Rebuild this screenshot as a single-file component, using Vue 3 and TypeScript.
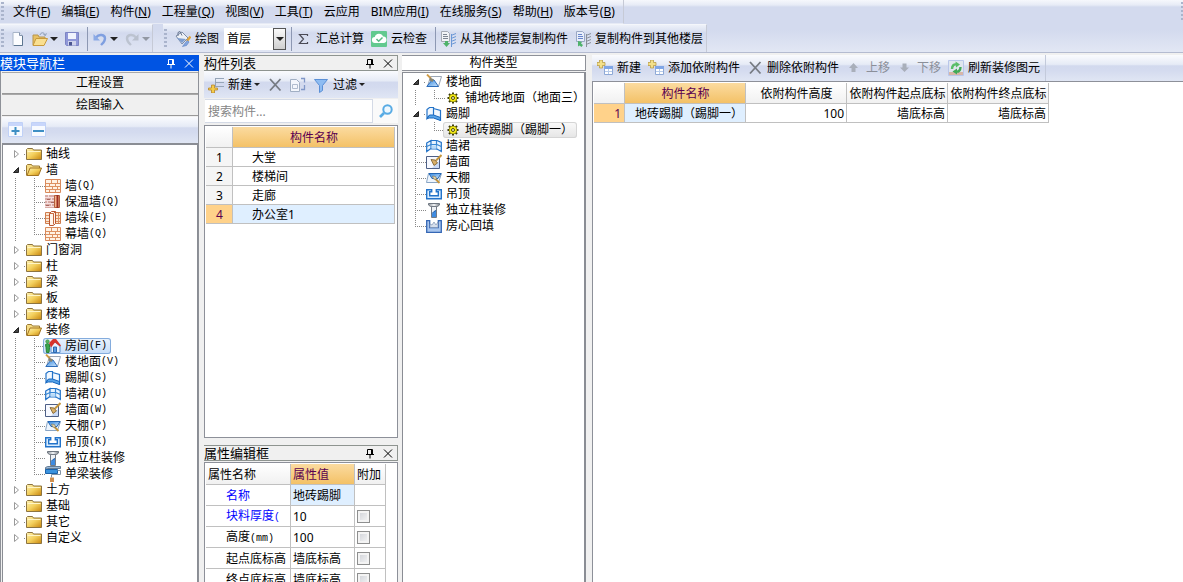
<script setup lang="ts">
import { ref } from 'vue'

interface MenuEntry { label: string; key?: string }
interface Command { icon: string; label: string; disabled?: boolean }
interface TreeNode {
  label: string
  key?: string
  icon: string
  open?: boolean
  leaf?: boolean
  selected?: boolean
  children?: TreeNode[]
}
interface PropertyRow { name: string; unit?: string; value: string; link?: boolean; check?: boolean }

const menus: MenuEntry[] = [
  { label: '文件', key: 'F' },
  { label: '编辑', key: 'E' },
  { label: '构件', key: 'N' },
  { label: '工程量', key: 'Q' },
  { label: '视图', key: 'V' },
  { label: '工具', key: 'T' },
  { label: '云应用' },
  { label: 'BIM应用', key: 'I' },
  { label: '在线服务', key: 'S' },
  { label: '帮助', key: 'H' },
  { label: '版本号', key: 'B' },
]

const floor = ref('首层')
const keyword = ref('')

const moduleTree: TreeNode[] = [
  { label: '轴线', icon: 'folder' },
  {
    label: '墙', icon: 'folder-open', open: true,
    children: [
      { label: '墙', key: 'Q', icon: 'brick' },
      { label: '保温墙', key: 'Q', icon: 'brick-warm' },
      { label: '墙垛', key: 'E', icon: 'brick-pier' },
      { label: '幕墙', key: 'Q', icon: 'brick' },
    ],
  },
  { label: '门窗洞', icon: 'folder' },
  { label: '柱', icon: 'folder' },
  { label: '梁', icon: 'folder' },
  { label: '板', icon: 'folder' },
  { label: '楼梯', icon: 'folder' },
  {
    label: '装修', icon: 'folder-open', open: true,
    children: [
      { label: '房间', key: 'F', icon: 'house', selected: true },
      { label: '楼地面', key: 'V', icon: 'floor' },
      { label: '踢脚', key: 'S', icon: 'skirting' },
      { label: '墙裙', key: 'U', icon: 'dado' },
      { label: '墙面', key: 'W', icon: 'wallface' },
      { label: '天棚', key: 'P', icon: 'ceiling' },
      { label: '吊顶', key: 'K', icon: 'suspended' },
      { label: '独立柱装修', icon: 'column' },
      { label: '单梁装修', icon: 'beam' },
    ],
  },
  { label: '土方', icon: 'folder' },
  { label: '基础', icon: 'folder' },
  { label: '其它', icon: 'folder' },
  { label: '自定义', icon: 'folder' },
]

const typeTree: TreeNode[] = [
  { label: '楼地面', icon: 'floor', open: true, children: [{ label: '铺地砖地面（地面三）', icon: 'gear' }] },
  { label: '踢脚', icon: 'skirting', open: true, children: [{ label: '地砖踢脚（踢脚一）', icon: 'gear', selected: true }] },
  { label: '墙裙', icon: 'dado', leaf: true },
  { label: '墙面', icon: 'wallface', leaf: true },
  { label: '天棚', icon: 'ceiling', leaf: true },
  { label: '吊顶', icon: 'suspended', leaf: true },
  { label: '独立柱装修', icon: 'column', leaf: true },
  { label: '房心回填', icon: 'backfill', leaf: true },
]

const trees = { module: moduleTree, type: typeTree }

const components = ['大堂', '楼梯间', '走廊', '办公室1']
const current = ref(3)

const properties: PropertyRow[] = [
  { name: '名称', value: '地砖踢脚', link: true },
  { name: '块料厚度', unit: '(', value: '10', link: true, check: true },
  { name: '高度', unit: '(mm)', value: '100', check: true },
  { name: '起点底标高', value: '墙底标高', check: true },
  { name: '终点底标高', value: '墙底标高', check: true },
]

const commands: Command[] = [
  { icon: 'add-table', label: '新建' },
  { icon: 'add-table', label: '添加依附构件' },
  { icon: 'cross', label: '删除依附构件' },
  { icon: 'up', label: '上移', disabled: true },
  { icon: 'down', label: '下移', disabled: true },
  { icon: 'refresh', label: '刷新装修图元' },
]
</script>

<template>
  <div class="app">
    <svg class="sprite" aria-hidden="true">
      <defs>
        <linearGradient id="gold" x1="0" y1="0" x2="1" y2="1"><stop offset="0" stop-color="#fff3b4" /><stop offset=".5" stop-color="#f3cf5c" /><stop offset="1" stop-color="#c8850c" /></linearGradient>
        <linearGradient id="sky" x1="0" y1="0" x2="1" y2="1"><stop offset="0" stop-color="#2f86e0" /><stop offset="1" stop-color="#cfe6fb" /></linearGradient>
        <linearGradient id="steel" x1="0" y1="0" x2="1" y2="0"><stop offset="0" stop-color="#8a9097" /><stop offset=".5" stop-color="#f4f6f8" /><stop offset="1" stop-color="#777d85" /></linearGradient>
      </defs>
      <symbol id="i-page" viewBox="0 0 16 16"><path d="M3 1.500h6.500l3 3v10H3z" fill="#fcfdff" stroke="#a9b6c9" /><path d="M9.500 1.500v3h3" fill="#d8e2f0" stroke="#8393ac" /><path d="M12.500 5v9.500H4" fill="none" stroke="#5d7690" /></symbol>
      <symbol id="i-open" viewBox="0 0 16 16"><path d="M1 14V4h5l1 2h6v3" fill="#e7c063" stroke="#b8954c" /><path d="M1 14.500L4 7.500h11.500L12 14.500z" fill="#f9df91" stroke="#c99a3b" /><path d="M8 4c1-3 4-3 5 0M11.500 3.500l2 1 .8-2.200" fill="none" stroke="#8c9db5" /></symbol>
      <symbol id="i-save" viewBox="0 0 16 16"><path d="M1.500 1.500h13v13h-12l-1-1z" fill="#8f97d8" stroke="#7d85c4" /><path d="M4 2h8v6H4z" fill="#f0f3fd" /><path d="M4 10h8v4.500H4z" fill="#cfd3ec" /><path d="M5 11h3v3.500H5z" fill="#4a5590" /></symbol>
      <symbol id="i-undo" viewBox="0 0 16 16"><path d="M4 6.500c3-4 9-3 9 1 0 3-2 4.500-4 6.500" fill="none" stroke="#7f9fe0" stroke-width="2.400" /><path d="M1.500 3v6.500H8z" fill="#8baae6" /></symbol>
      <symbol id="i-redo" viewBox="0 0 16 16"><path d="M12 6.500c-3-4-9-3-9 1 0 3 2 4.500 4 6.500" fill="none" stroke="#bcc3d0" stroke-width="2.400" /><path d="M14.500 3v6.500H8z" fill="#b9c0cd" /></symbol>
      <symbol id="i-paint" viewBox="0 0 16 16"><path d="M1 5l6-4 6 6-6 6z" fill="#eef1f6" stroke="#7d8da8" /><path d="M2 7l5 5 4-4z" fill="#7e9ed0" /><path d="M3 5V1.500L5 .5l2 4" fill="none" stroke="#66758f" /><path d="M15.500 5.500L12 10" stroke="#e0a437" stroke-width="2.200" /><path d="M12.500 9.500l1.500 1.500-2.500 3.500-4 1 3-4z" fill="#83a6df" stroke="#5a80c0" stroke-width=".6" /></symbol>
      <symbol id="i-sum" viewBox="0 0 16 16"><path d="M11.500 5V3.500h-8L7.500 8l-4 4.500h8V11" fill="none" stroke="#4a4a55" stroke-width="1.200" /></symbol>
      <symbol id="i-cloud" viewBox="0 0 16 16"><rect width="16" height="16" rx="1" fill="#62c98f" /><path d="M4 12a3 3 0 01-.2-6A4.300 4.300 0 0112 5.600 3.200 3.200 0 0112.500 12z" fill="#fff" /><path d="M5.500 8l2.200 2.200L11.500 6.500" fill="none" stroke="#58b884" stroke-width="1.500" /></symbol>
      <symbol id="i-copy-from" viewBox="0 0 16 16"><path d="M1.500.5h6l2 2v8h-8z" fill="#f2f4f8" stroke="#a5aab4" /><path d="M3 3.500h4M3 5.500h5M3 7.500h5" stroke="#7d8592" /><path d="M11.500 3v13M11 4.500l5-2M11 7.500l5-2M11 10.500l5-2M11 13.500l5-2" stroke="#6b98d6" fill="none" /><path d="M5 10h3v2h2l-3.500 4L3 12h2z" fill="#4fb26b" /></symbol>
      <symbol id="i-copy-to" viewBox="0 0 16 16"><path d="M1.500.5h6l2 2v8h-8z" fill="#e8eefb" stroke="#9aa8c4" /><path d="M3 3.500h4M3 5.500h5M3 7.500h5" stroke="#6885cc" /><path d="M11.500 3v13M11 4.500l5-2M11 7.500l5-2M11 10.500l5-2M11 13.500l5-2" stroke="#8a9099" fill="none" /><path d="M3 10l4 1-1 1.500L8 14l-1.500 2-2-1.500L3 15.500z" fill="#4fb26b" /></symbol>
      <symbol id="i-plus" viewBox="0 0 16 16"><path d="M.5.500h14v14H.5z" fill="#f7faff" stroke="#c0d1f7" /><path d="M1 1h13v3H1z" fill="#c8d6fb" /><path d="M3.500 9h8M7.500 5v8" stroke="#3e8fc4" stroke-width="2" /></symbol>
      <symbol id="i-minus" viewBox="0 0 16 16"><path d="M.5.500h14v14H.5z" fill="#f7faff" stroke="#c0d1f7" /><path d="M1 1h13v3H1z" fill="#c8d6fb" /><path d="M2 9h11" stroke="#3e8fc4" stroke-width="2" /></symbol>
      <symbol id="i-folder" viewBox="0 0 16 16"><path d="M.5 13.500V3.500l1-1h5l1 1.500h8v9.500z" fill="url(#gold)" stroke="#8d7440" /><path d="M1.500 5.500h13" stroke="#fff5c6" /></symbol>
      <symbol id="i-folder-open" viewBox="0 0 16 16"><path d="M.5 13.500V3.500l1-1h4l1 1.500h7v3" fill="#f6dc84" stroke="#9b7a34" /><path d="M1 13.500l3-7.500h11.500L12.500 13.500z" fill="url(#gold)" stroke="#a27421" /></symbol>
      <symbol id="i-brick" viewBox="0 0 16 16"><path d="M.5 1.500h15v13H.5z" fill="#fff2e4" stroke="#d98a5c" /><path d="M1 5.500h14M1 8.500h14M1 11.500h14M6.500 2v3.500M12.500 2v3.500M4.500 6v2.500M10.500 6v2.500M7.500 9v2.500M12.500 9v2.500M4.500 12v2M10.500 12v2" stroke="#dd9162" /></symbol>
      <symbol id="i-brick-warm" viewBox="0 0 16 16"><path d="M0 1h10v13H0z" fill="#d9aca6" /><path d="M0 3.500h9M0 6.500h9M0 9.500h9M0 12.500h9M3.500 1v2M6.500 4v2M2.500 7v2M6.500 10v2" stroke="#f5dede" /><path d="M2 5.500h3M6 8.500h3M1 11.500h3" stroke="#a86762" /><path d="M9.500 1.500h5v12h-5z" fill="#f3b58e" stroke="#b3603d" /><path d="M12.500 1v13" stroke="#9c2f22" stroke-width="2" /></symbol>
      <symbol id="i-brick-pier" viewBox="0 0 16 16"><path d="M.5 2.500h15v11H.5z" fill="#fbe6d0" stroke="#cf7c4e" /><path d="M1 5.500h14M1 8.500h14M1 11.500h14M13.500 3v10" stroke="#dd9162" /><path d="M4.500 3.500l2-2h4v12l-2 2h-4z" fill="#fff6ed" stroke="#b95631" /><path d="M8.500 3.500v11M4.500 3.500h4l2-2" fill="none" stroke="#c8693f" /></symbol>
      <symbol id="i-house" viewBox="0 0 16 16"><path d="M6 8l4-4 5 4v6.500H6z" fill="#e9f2fd" stroke="#568dca" /><path d="M4 5l4-4h3l5 6.500-1 1L10 4.500 6 9.500z" fill="#d8332b" /><path d="M8.500 9h3v5.500h-3z" fill="#5c9be0" stroke="#2e68ac" /><path d="M.5 6.500l2-1 2 1v3l-.5 5H1.500l-.5-5z" fill="#3ca64c" stroke="#27803a" /><circle cx="2.500" cy="3.500" r="1.800" fill="#58b45c" stroke="#2f8a3c" stroke-width=".5" /></symbol>
      <symbol id="i-floor" viewBox="0 0 16 16"><path d="M4.500 2.500h11l-3 10H1.500z" fill="#fafcff" stroke="#9aa5b4" /><path d="M.8 12.500L6 6h2l4.500 6.500z" fill="url(#sky)" stroke="#2d6cb9" /><path d="M1 .5l4 4" stroke="#cf9b45" stroke-width="1.800" /><path d="M4 3.500l4 2L6.500 8 3.500 6.500z" fill="#8a8470" /></symbol>
      <symbol id="i-skirting" viewBox="0 0 16 16"><path d="M1 3.500L3.500 1.500h4v8h-4L1 12.500zM7.500 2.500l7 2v9.500l-7-3z" fill="#f2f8fe" stroke="#2373c8" stroke-width="1.200" /><path d="M1 12.500l2.500-3.500h4l7 2.500V14.500l-7-2.500h-4z" fill="#57a4e9" stroke="#1866bd" /></symbol>
      <symbol id="i-dado" viewBox="0 0 16 16"><path d="M.7 5L5 2.500v8L.7 13.500zM5 2.500h6l4.300 2v9L11 11H5z" fill="#e9f4fe" stroke="#2373c8" stroke-width="1.200" /><path d="M.7 8.500L5 6.500h6l4.300 2M10.500 3v8.500" fill="none" stroke="#3787d4" stroke-width="1.200" /><path d="M5.500 7.500h5v3h-5z" fill="#b9dbf8" /></symbol>
      <symbol id="i-wallface" viewBox="0 0 16 16"><path d="M.5 2.500h13v12H.5z" fill="#f7f9ff" stroke="#4d5f86" /><path d="M6 14l7-7v7z" fill="#c9daf6" /><path d="M15.500 1L10 6.500" stroke="#c5963c" stroke-width="2" /><path d="M5 5.500l4 .5 2.500 3L8 11.500z" fill="#d9b068" stroke="#775b29" stroke-width=".8" /></symbol>
      <symbol id="i-ceiling" viewBox="0 0 16 16"><path d="M2.500 3.500h13l-3 9h-12z" fill="#eef5fd" stroke="#88a4c4" /><path d="M3 3.500h12l-3 5H6z" fill="url(#sky)" stroke="#2467b4" /><path d="M9 8.500l4.500 4.500" stroke="#c6953b" stroke-width="1.800" /><path d="M6.500 6l3 .5 1.500 3-3.500-.5z" fill="#e5d5a8" stroke="#6d6959" stroke-width=".6" /></symbol>
      <symbol id="i-suspended" viewBox="0 0 16 16"><path d="M.7 3.700h5v2h-2v4h8.600v-4h-2v-2h5v9H.7z" fill="#d8ecfe" stroke="#2273ca" stroke-width="1.400" /></symbol>
      <symbol id="i-column" viewBox="0 0 16 16"><path d="M2.500 1.500h11v1.500l-2 1.500h-7l-2-1.500z" fill="url(#steel)" stroke="#6f7781" /><path d="M5.500 4.500h5v11h-5z" fill="#eef1f5" stroke="#747b85" /><path d="M6 11.500l2-2 2-1V15H6z" fill="#3f8be0" /><path d="M6 11.500l2-2 2-1" fill="none" stroke="#1c5ba6" /></symbol>
      <symbol id="i-beam" viewBox="0 0 16 16"><path d="M.5 1.500l2-1h13v2h-13l-2 1z" fill="#9bb8d6" stroke="#49637f" stroke-width=".8" /><path d="M.5 3.500h12v4H.5z" fill="#3b93de" stroke="#1d62a8" /><path d="M12.500 4.500h3v4h-9v3" fill="none" stroke="#8494a4" /><path d="M5 11.500h4V16H5z" fill="#cf9050" /></symbol>
      <symbol id="i-backfill" viewBox="0 0 16 16"><path d="M.7 2.700h3v7h8.600v-7h3v11.600H.7z" fill="#a9c6ee" stroke="#3567b5" stroke-width="1.300" /><path d="M4 9.500V6l2 1 2-3 2 3 2-3v5.500z" fill="#d6dfec" stroke="#7e93b5" stroke-width=".7" /></symbol>
      <symbol id="i-gear" viewBox="0 0 16 16"><g stroke="#38370c" stroke-width="2"><path d="M8 2.500v11M2.500 8h11M4 4l8 8M12 4l-8 8" /></g><circle cx="8" cy="8" r="4" fill="#f4ea13" stroke="#6a670d" stroke-width=".6" /><circle cx="8" cy="8" r="1.500" fill="#fffbc0" stroke="#4b490b" /></symbol>
      <symbol id="i-new-item" viewBox="0 0 16 16"><path d="M7 1.500h9M7 5.500h9M7 9.500h9" stroke="#96a5b8" /><path d="M7.500 1v9" stroke="#96a5b8" /><path d="M3.500 8h3v3h3v2h-3v3h-3v-3h-3v-2h3z" fill="#f5cd4a" stroke="#b7872a" stroke-width=".8" /></symbol>
      <symbol id="i-cross" viewBox="0 0 16 16"><path d="M3 2l10.500 11.500M13.500 2L3 13.500" stroke="#767b82" stroke-width="1.800" /></symbol>
      <symbol id="i-copy" viewBox="0 0 16 16"><path d="M.5 2.500h6l3 3v9h-9z" fill="#f3f6fc" stroke="#a1afc4" /><path d="M2.500 7.500h5v4h-5z" fill="none" stroke="#b0bccf" /><path d="M11 1.500h3.500v4M14.500 8v4.500H11" fill="none" stroke="#8097c8" stroke-width="1.300" /></symbol>
      <symbol id="i-funnel" viewBox="0 0 16 16"><path d="M1.500 2.500h13L9.500 8.500v5l-3 2v-7z" fill="#8ebcf2" stroke="#5a8fd6" /></symbol>
      <symbol id="i-search" viewBox="0 0 16 16"><circle cx="9.500" cy="6.500" r="4.200" fill="#eef8ff" stroke="#58abe4" stroke-width="2" /><path d="M6 10l-4 4" stroke="#58abe4" stroke-width="2.600" /></symbol>
      <symbol id="i-add-table" viewBox="0 0 16 16"><path d="M7.500 6.500h8v8h-8z" fill="#fff" stroke="#8ea9d6" /><path d="M7 6h9v3H7z" fill="#7fa6e6" /><path d="M8 11.500h7M11.500 9v5" stroke="#b7cbea" /><path d="M2.500 0h3v2.500H8v3H5.500V8h-3V5.500H0v-3h2.500z" fill="#f3e089" stroke="#b1933a" stroke-width=".7" /></symbol>
      <symbol id="i-up" viewBox="0 0 16 16"><path d="M7.500 3l4.500 5H9.500v4h-4V8H3z" fill="#a9afba" /></symbol>
      <symbol id="i-down" viewBox="0 0 16 16"><path d="M7.500 12L12 7.500H9.500v-4h-4v4H3z" fill="#a9afba" /></symbol>
      <symbol id="i-refresh" viewBox="0 0 16 16"><path d="M.5.500h15v15H.5z" fill="#dfe6ee" stroke="#b9c6ea" /><path d="M1 13.500h14" stroke="#d8b6a8" stroke-width="3" /><path d="M4 9c0-3.500 2-5 4.500-4.500" fill="none" stroke="#58bd68" stroke-width="2.400" /><path d="M7.500 1.500L12 4.500l-4 3z" fill="#58bd68" /><path d="M12.500 7c0 3.500-2 5-4.500 4.500" fill="none" stroke="#42aa57" stroke-width="2.400" /><path d="M9 8.500v6L4.500 11.500z" fill="#42aa57" /></symbol>
      <symbol id="i-pin" viewBox="0 0 12 12"><path d="M3.500 2.500h5v5h-5zM2 7.500h8M6 8v3.500M7.500 3v4" fill="none" stroke="currentColor" /></symbol>
      <symbol id="i-close" viewBox="0 0 12 12"><path d="M2 2.500l8 8M10 2.500l-8 8" fill="none" stroke="currentColor" /></symbol>
      <symbol id="i-expanded" viewBox="0 0 8 8"><path d="M6.500 1.500v5h-5z" fill="#444" stroke="#222" /></symbol>
      <symbol id="i-collapsed" viewBox="0 0 8 8"><path d="M2.500.500v7L6.500 4z" fill="#fff" stroke="#9a9a9a" /></symbol>
    </svg>

    <div class="commands">
      <nav class="menubar">
        <div class="strip menu-strip">
          <span class="grip"></span>
          <button v-for="m in menus" :key="m.label" type="button" class="menu">{{ m.label }}<template v-if="m.key">(<u>{{ m.key }}</u>)</template></button>
        </div>
        <span class="grip end"></span>
      </nav>

      <div class="toolbars">
        <div class="strip file-strip">
          <span class="grip"></span>
          <button type="button" class="tool" aria-label="新建"><svg class="icon"><use href="#i-page" /></svg></button>
          <button type="button" class="tool split" aria-label="打开"><svg class="icon"><use href="#i-open" /></svg><i class="caret"></i></button>
          <button type="button" class="tool" aria-label="保存"><svg class="icon"><use href="#i-save" /></svg></button>
          <span class="divider"></span>
          <button type="button" class="tool split" aria-label="撤销"><svg class="icon"><use href="#i-undo" /></svg><i class="caret"></i></button>
          <button type="button" class="tool split" aria-label="恢复" disabled><svg class="icon"><use href="#i-redo" /></svg><i class="caret"></i></button>
        </div>
        <div class="strip draw-strip">
          <span class="grip"></span>
          <button type="button" class="tool"><svg class="icon"><use href="#i-paint" /></svg>绘图</button>
          <label class="floor">
            <select v-model="floor" aria-label="楼层"><option>首层</option></select>
            <span class="floor-arrow"><i class="caret"></i></span>
          </label>
          <span class="divider"></span>
          <button type="button" class="tool"><svg class="icon"><use href="#i-sum" /></svg>汇总计算</button>
          <button type="button" class="tool"><svg class="icon"><use href="#i-cloud" /></svg>云检查</button>
          <span class="divider"></span>
          <button type="button" class="tool"><svg class="icon"><use href="#i-copy-from" /></svg>从其他楼层复制构件</button>
          <button type="button" class="tool"><svg class="icon"><use href="#i-copy-to" /></svg>复制构件到其他楼层</button>
        </div>
      </div>
    </div>

    <div class="workspace">
      <aside class="module">
        <header class="caption active">
          <h2>模块导航栏</h2>
          <button type="button" aria-label="固定"><svg><use href="#i-pin" /></svg></button>
          <button type="button" aria-label="关闭"><svg><use href="#i-close" /></svg></button>
        </header>
        <div class="module-body">
          <button type="button" class="section">工程设置</button>
          <button type="button" class="section">绘图输入</button>
          <div class="bar tree-bar">
            <button type="button" class="tool" aria-label="展开"><svg class="icon"><use href="#i-plus" /></svg></button>
            <button type="button" class="tool" aria-label="折叠"><svg class="icon"><use href="#i-minus" /></svg></button>
          </div>
          <ul class="tree">
            <li v-for="n in trees.module" :key="n.label">
              <div class="node">
                <button type="button" class="twist" :aria-label="n.label"><svg><use :href="n.open ? '#i-expanded' : '#i-collapsed'" /></svg></button>
                <span class="item"><svg class="icon"><use :href="'#i-' + n.icon" /></svg>{{ n.label }}</span>
              </div>
              <ul v-if="n.children">
                <li v-for="c in n.children" :key="c.label" class="node child">
                  <span class="elbow"></span>
                  <span class="item" :class="{ picked: c.selected }"><svg class="icon"><use :href="'#i-' + c.icon" /></svg>{{ c.label }}<span v-if="c.key" class="mono">({{ c.key }})</span></span>
                </li>
              </ul>
            </li>
          </ul>
        </div>
      </aside>

      <div class="middle">
        <section class="list">
          <header class="caption">
            <h2>构件列表</h2>
            <button type="button" aria-label="固定"><svg><use href="#i-pin" /></svg></button>
            <button type="button" aria-label="关闭"><svg><use href="#i-close" /></svg></button>
          </header>
          <div class="bar list-bar">
            <button type="button" class="tool split"><svg class="icon"><use href="#i-new-item" /></svg>新建<i class="caret"></i></button>
            <button type="button" class="tool" aria-label="删除"><svg class="icon"><use href="#i-cross" /></svg></button>
            <button type="button" class="tool" aria-label="复制"><svg class="icon"><use href="#i-copy" /></svg></button>
            <button type="button" class="tool split"><svg class="icon"><use href="#i-funnel" /></svg>过滤<i class="caret"></i></button>
          </div>
          <div class="search">
            <input v-model="keyword" type="text" placeholder="搜索构件..." aria-label="搜索构件" />
            <button type="button" aria-label="搜索"><svg class="icon"><use href="#i-search" /></svg></button>
          </div>
          <div class="sunken">
            <table class="grid list-grid">
              <colgroup><col class="c-num" /><col /></colgroup>
              <thead><tr><th></th><th class="hot">构件名称</th></tr></thead>
              <tbody>
                <tr v-for="(c, i) in components" :key="c" :class="{ current: i === current }" @click="current = i">
                  <th scope="row">{{ i + 1 }}</th>
                  <td>{{ c }}</td>
                </tr>
              </tbody>
            </table>
          </div>
        </section>

        <section class="props">
          <header class="caption">
            <h2>属性编辑框</h2>
            <button type="button" aria-label="固定"><svg><use href="#i-pin" /></svg></button>
            <button type="button" aria-label="关闭"><svg><use href="#i-close" /></svg></button>
          </header>
          <div class="sunken">
            <table class="grid prop-grid">
              <colgroup><col class="c-name" /><col class="c-value" /><col class="c-add" /></colgroup>
              <thead><tr><th>属性名称</th><th class="hot">属性值</th><th>附加</th></tr></thead>
              <tbody>
                <tr v-for="(p, i) in properties" :key="p.name">
                  <td class="prop-name" :class="{ link: p.link }">{{ p.name }}<span v-if="p.unit" class="mono">{{ p.unit }}</span></td>
                  <td :class="{ focus: i === 0 }">{{ p.value }}</td>
                  <td><input v-if="p.check" type="checkbox" :aria-label="p.name" /></td>
                </tr>
              </tbody>
            </table>
          </div>
        </section>
      </div>

      <section class="types">
        <header class="type-title">构件类型</header>
        <ul class="tree">
          <li v-for="(n, i) in trees.type" :key="n.label">
            <div class="node">
              <span v-if="n.leaf" class="branch" :class="{ last: i === trees.type.length - 1 }"></span>
              <button v-else type="button" class="twist" :aria-label="n.label"><svg><use href="#i-expanded" /></svg></button>
              <span class="item"><svg class="icon"><use :href="'#i-' + n.icon" /></svg>{{ n.label }}</span>
            </div>
            <ul v-if="n.children">
              <li v-for="c in n.children" :key="c.label" class="node child">
                <span class="elbow"></span>
                <span class="item" :class="{ soft: c.selected }"><svg class="icon"><use :href="'#i-' + c.icon" /></svg>{{ c.label }}</span>
              </li>
            </ul>
          </li>
        </ul>
      </section>

      <main class="detail">
        <div class="bar detail-bar">
          <div class="detail-strip">
            <button v-for="c in commands" :key="c.label" type="button" class="tool" :disabled="c.disabled"><svg class="icon"><use :href="'#i-' + c.icon" /></svg>{{ c.label }}</button>
          </div>
        </div>
        <div class="sheet">
          <table class="grid detail-grid">
            <colgroup><col class="c-num" /><col class="c-name" /><col class="c-wide" /><col class="c-wide" /><col class="c-wide" /></colgroup>
            <thead>
              <tr><th></th><th class="hot">构件名称</th><th>依附构件高度</th><th>依附构件起点底标</th><th>依附构件终点底标</th></tr>
            </thead>
            <tbody>
              <tr class="current"><th scope="row">1</th><td>地砖踢脚（踢脚一）</td><td>100</td><td>墙底标高</td><td>墙底标高</td></tr>
            </tbody>
          </table>
        </div>
      </main>
    </div>
  </div>
</template>

<style>
body { margin: 0; background: #f0f0f0; }
</style>

<style scoped>
.app {
  display: flex;
  flex-direction: column;
  height: 100vh;
  overflow: hidden;
  background: #f0f0f0;
  color: #000;
  font: 12px/16px "Noto Sans", "Noto Sans CJK SC", sans-serif;
}
.app * { box-sizing: border-box; }
.sprite { position: absolute; width: 0; height: 0; }
button, input, select { font: inherit; color: inherit; margin: 0; }
button { padding: 0; border: 0; background: none; white-space: nowrap; }
h2 { margin: 0; font: inherit; }
ul { margin: 0; padding: 0; list-style: none; }
svg { display: block; }
.icon { width: 16px; height: 16px; flex: none; }
.mono { font: 10px/16px "Liberation Mono", monospace; }

.commands {
  flex: none;
  background: linear-gradient(#f6f8fc 0, #e7ebf6 5px, #d3daee 7px, #d3daee 30px, #e2e7f4 100%);
  border-bottom: 1px solid #b4bbd0;
  margin-bottom: 2px;
}
.menubar, .toolbars { display: flex; }
.menubar { height: 24px; justify-content: space-between; align-items: center; }
.strip { display: flex; align-items: center; height: 100%; border-right: 1px solid #c6cad6; }
.menu-strip { border-bottom: 1px solid #e6eaf5; padding-right: 3px; }
.menu { padding: 0 5px 0 6px; height: 22px; }
.grip {
  width: 3px;
  height: 20px;
  flex: none;
  margin: 0 4px 0 1px;
  background: repeating-linear-gradient(#aab4cc 0 2px, transparent 2px 4px);
}
.menu-strip .grip { margin-right: 3px; }
.file-strip .grip { margin-right: 2px; }
.grip.end { margin: 0; width: 2px; }
.toolbars { height: 28px; }
.toolbars .strip { border-top: 1px solid #f4f6fb; background: linear-gradient(#eef1f9 0, #dfe5f3 5px, #d3daee 8px, #e0e5f3 100%); }
.draw-strip { margin-left: 10px; }
.tool { display: flex; align-items: center; gap: 4px; height: 22px; padding: 0 3px 0 4px; }
.tool:disabled { color: #8b8f99; }
.caret { border: 4px solid transparent; border-top-color: #222; border-bottom: 0; }
.tool:disabled .caret { border-top-color: #9298a3; }
.file-strip .tool { padding-right: 2px; }
.file-strip .split { gap: 2px; }
.divider { width: 1px; height: 24px; background: #8d98b3; margin: 0 0 0 5px; }
.floor { display: flex; height: 22px; width: 62px; margin-left: 2px; background: #fff; }
.floor select { flex: 1; min-width: 0; appearance: none; border: 0; border-radius: 0; background: none; padding: 0 3px; outline: 0; }
.floor-arrow { display: flex; align-items: center; justify-content: center; width: 13px; border: 1px solid #555; background: linear-gradient(#fafafa, #cfcfcf); }
.floor-arrow .caret { border-width: 4px; border-bottom: 0; }

.workspace { display: grid; grid-template-columns: 199px 194px 184px minmax(0, 1fr); flex: 1; min-height: 0; }
.workspace > * { min-height: 0; }
.middle { margin-left: 5px; margin-right: -5px; }
.types { margin-left: 9px; margin-right: -9px; }
.detail { margin-left: 15px; }

.caption { display: flex; align-items: center; flex: none; height: 16px; gap: 6px; padding-right: 3px; border: 1px solid #8e9490; border-left: 0; background: #f0f0f0; }
.caption h2 { flex: 1; font-size: 13px; line-height: 14px; }
.caption svg { width: 12px; height: 12px; }
.caption.active { background: #0054e3; border-color: #0054e3; color: #fff; }

.module { display: flex; flex-direction: column; }
.module-body { display: flex; flex-direction: column; flex: 1; min-height: 0; padding-left: 1px; border-left: 1px solid #8e9198; border-right: 1px solid #8e9198; }
.section { height: 22px; margin-top: 1px; border-bottom: 1px solid #999; border-top: 1px solid #a8a8a8; background: #f0f0f0; flex: none; }
.section + .section { margin-top: 0; }
.bar { display: flex; align-items: center; flex: none; background: linear-gradient(#fafbfe 0, #e6ebf6 36%, #d2d9ee 42%, #d4dbef 60%, #e0e6f4 100%); }
.tree-bar { height: 26px; margin-top: 1px; padding-left: 2px; }
.tree { flex: 1; min-height: 0; overflow: hidden; background: #fff; border: 2px solid #8a8d94; border-width: 2px 1px 0 1px; padding-top: 1px; }
.node { display: flex; align-items: center; height: 16px; }
.twist { display: flex; align-items: center; width: 23px; height: 16px; padding-left: 9px; background: linear-gradient(90deg, #888 0 1px, transparent 1px) 21px 8px / 2px 1px no-repeat; }
.twist svg { width: 8px; height: 8px; }
.item { display: flex; align-items: center; gap: 4px; height: 16px; white-space: nowrap; }
.item .mono { margin-left: -4px; }
.elbow { width: 42px; height: 16px; flex: none;
  background:
    repeating-linear-gradient(#888 0 1px, transparent 1px 2px) 12px 0 / 1px 16px no-repeat,
    repeating-linear-gradient(#888 0 1px, transparent 1px 2px) 31px 0 / 1px 16px no-repeat,
    repeating-linear-gradient(90deg, #888 0 1px, transparent 1px 2px) 31px 8px / 11px 1px no-repeat; }
.child:last-child .elbow { background-size: 1px 16px, 1px 9px, 11px 1px; }
.branch { width: 23px; height: 16px;
  background:
    repeating-linear-gradient(#888 0 1px, transparent 1px 2px) 12px 0 / 1px 16px no-repeat,
    repeating-linear-gradient(90deg, #888 0 1px, transparent 1px 2px) 12px 8px / 11px 1px no-repeat; }
.branch.last { background-size: 1px 9px, 11px 1px; }
.picked, .soft { padding: 0 4px 0 2px; margin-left: -2px; border-radius: 3px; }
.picked { background: linear-gradient(#eaf3fd, #c6ddf8); box-shadow: inset 0 0 0 1px #84acdd; }
.soft { background: linear-gradient(#fafafa, #e5e5e5); box-shadow: inset 0 0 0 1px #d5d5d5; }

.middle { display: flex; flex-direction: column; gap: 7px; }
.list { display: flex; flex-direction: column; flex: 1; min-height: 0; }
.props { display: flex; flex-direction: column; height: 137px; }
.list-bar { height: 27px; }
.list-bar .caret { margin-left: -2px; border-width: 3px; border-bottom: 0; }
.search { display: flex; align-items: center; flex: none; height: 26px; padding-left: 1px; background: #f0f0f0; }
.search input { flex: 1; min-width: 0; height: 24px; padding: 0 3px; border: 1px solid #d4dae6; border-left: 0; background: #fff; outline: 0; }
.search input::placeholder { color: #858585; opacity: 1; }
.search button { display: flex; align-items: center; justify-content: center; width: 25px; height: 24px; background: #fafafa; }
.sunken { flex: 1; min-height: 0; margin-top: 1px; padding: 1px; overflow: hidden; background: #fff; border: 1px solid #8d9099; }
.props .sunken { border-bottom: 0; padding-bottom: 0; }

.grid { border-collapse: collapse; table-layout: fixed; }
.grid th, .grid td { height: 19px; padding: 0; font-weight: normal; line-height: 16px; border: 0; box-shadow: inset -1px -1px #c0c0c0; white-space: nowrap; overflow: hidden; }
.grid thead th { height: 21px; background: linear-gradient(#fff, #f0f0f0); }
.grid thead th.hot { background: linear-gradient(#fbdba0, #f3c064); color: #5a0050; }
.grid tbody th { background: #f5f5f5; }
.grid .current th { background: #ffd28a; color: #5a0050; }
.list-grid { width: 189px; }
.list-grid .c-num { width: 27px; }
.list-grid td { padding-left: 19px; }
.list-grid .current td { background: #dfefff; }

.prop-grid { width: 180px; }
.prop-grid .c-name { width: 85px; }
.prop-grid .c-value { width: 64px; }
.prop-grid thead th { text-align: left; padding-left: 2px; }
.prop-grid tbody td { height: 21px; padding-left: 2px; line-height: 16px; }
.prop-grid tbody td.prop-name { padding-left: 20px; }
.prop-grid tbody .link { color: #00f; }
.prop-grid tbody .focus { background: #dfefff; }
.prop-grid input { display: block; appearance: none; width: 13px; height: 13px; border: 1px solid #8e8f8f; background: linear-gradient(135deg, #cdd0d6, #f8f8f8); box-shadow: inset 0 0 0 2px #f4f4f4; }

.types { display: flex; flex-direction: column; }
.type-title { flex: none; height: 16px; line-height: 14px; text-align: center; background: #fff; border: solid #8e9198; border-width: 1px 1px 1px 0; }
.types .tree { margin-top: 1px; border-width: 1px 2px 0 1px; }

.detail { display: flex; flex-direction: column; background: #fff; }
.detail-bar { height: 26px; align-items: stretch; }
.detail-strip { display: flex; align-items: center; padding-left: 1px; padding-right: 2px; border-right: 1px solid #c3cadb; }
.sheet { flex: 1; padding: 1px; border: solid #8d9099; border-width: 1px 0 0 1px; background: #fff; overflow: auto; }
.detail-grid { width: 455px; }
.detail-grid .c-num { width: 31px; }
.detail-grid .c-name { width: 121px; }
.detail-grid .c-wide { width: 101px; }
.detail-grid td { text-align: right; padding-right: 3px; }
.detail-grid tbody th { text-align: right; padding-right: 4px; }
.detail-grid .current td:nth-child(2) { text-align: left; padding-left: 10px; background: #dfefff; }
</style>
